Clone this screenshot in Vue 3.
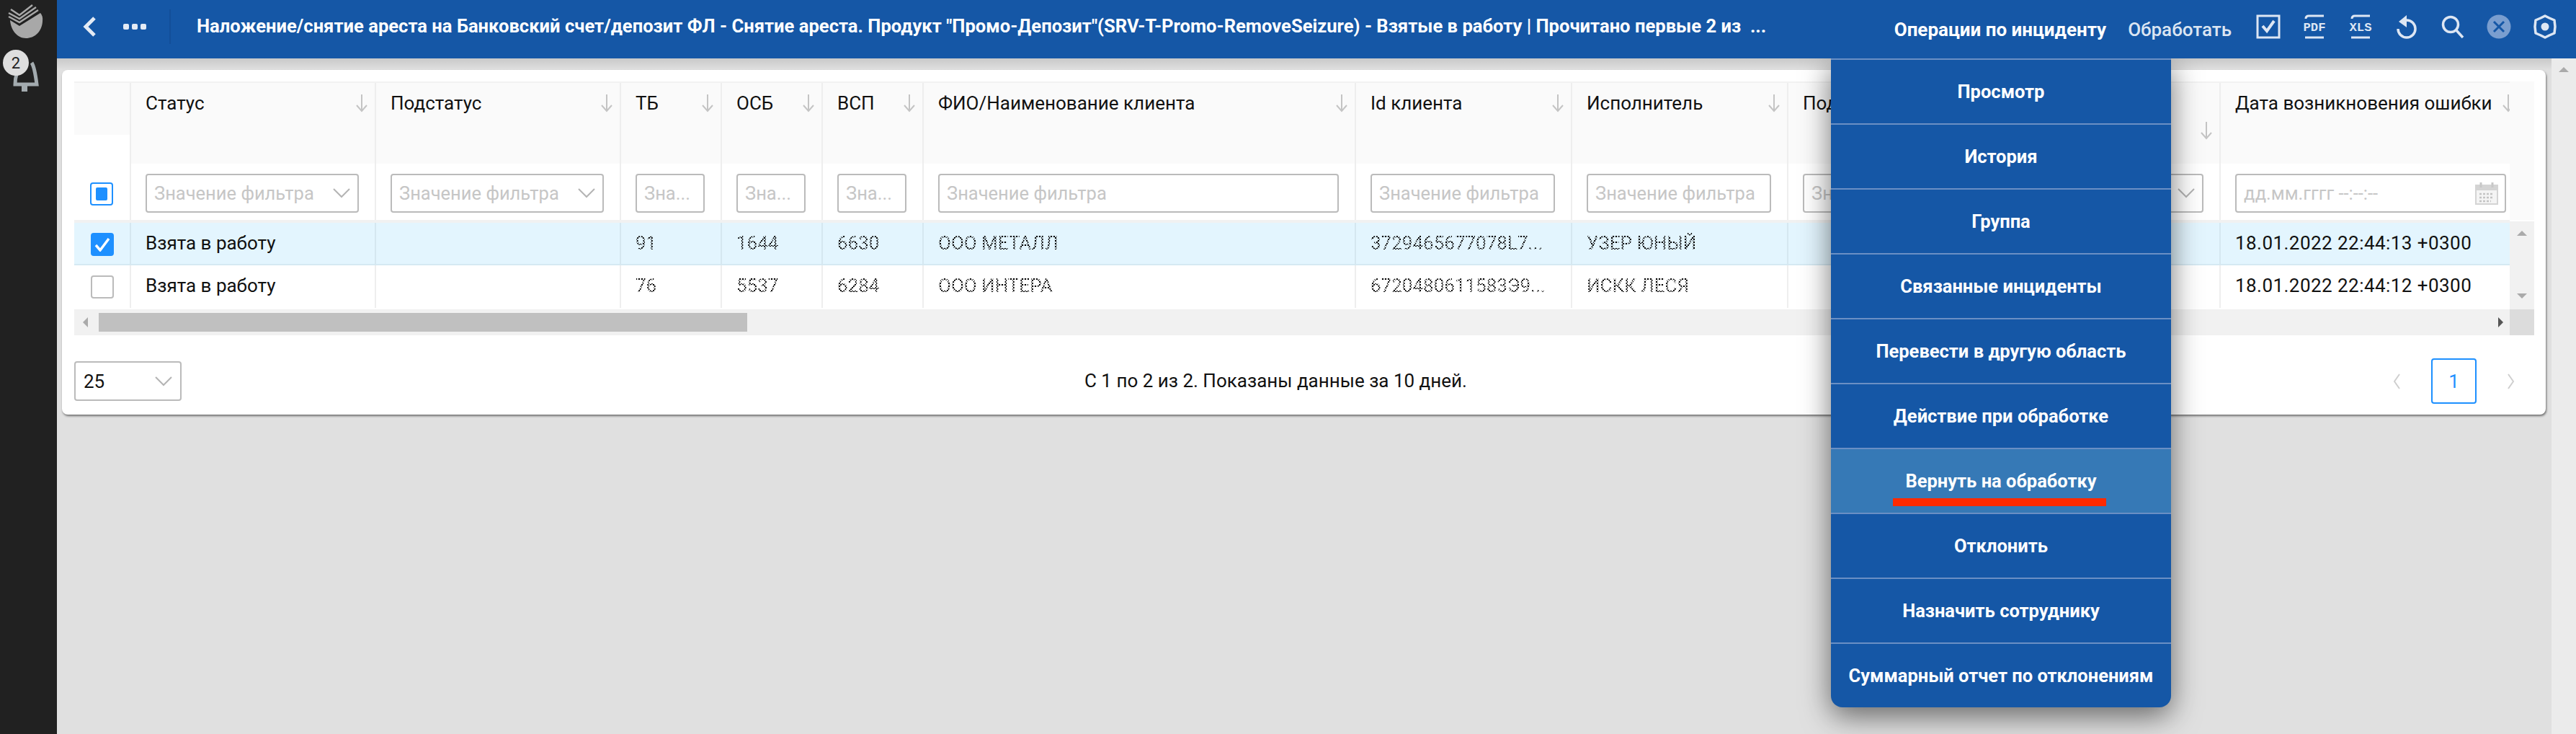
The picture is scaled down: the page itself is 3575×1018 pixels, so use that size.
<script setup>
const columns = [
  { title: 'Статус', filter: 'select', cls: 'c-status' },
  { title: 'Подстатус', filter: 'select', cls: 'c-status' },
  { title: 'ТБ', filter: 'text', ph: 'Зна...' },
  { title: 'ОСБ', filter: 'text', ph: 'Зна...' },
  { title: 'ВСП', filter: 'text', ph: 'Зна...' },
  { title: 'ФИО/Наименование клиента', filter: 'text' },
  { title: 'Id клиента', filter: 'text' },
  { title: 'Исполнитель', filter: 'text' },
  { title: 'Под', filter: 'text', ph: 'Зн' },
  { title: '', filter: 'select', low: true, ph: ' ' },
  { title: 'Дата возникновения ошибки', filter: 'date', cls: 'c-date' },
]
const rows = [
  { selected: true, cells: ['Взята в работу', '', '91', '1644', '6630', 'ООО МЕТАЛЛ', '3729465677078L7...', 'УЗЕР ЮНЫЙ', '', '', '18.01.2022 22:44:13 +0300'] },
  { selected: false, cells: ['Взята в работу', '', '76', '5537', '6284', 'ООО ИНТЕРА', '6720480611583Э9...', 'ИСКК ЛЕСЯ', '', '', '18.01.2022 22:44:12 +0300'] },
]
const masked = [2, 3, 4, 5, 6, 7]
const menu = ['Просмотр', 'История', 'Группа', 'Связанные инциденты', 'Перевести в другую область', 'Действие при обработке', 'Вернуть на обработку', 'Отклонить', 'Назначить сотруднику', 'Суммарный отчет по отклонениям']
</script>

<template>
  <div class="app">
    <aside class="side">
      <svg class="logo" width="79" height="60" viewBox="0 0 79 60">
        <path d="M14 28 L27 36 L56 18 Q60 22 59 30 C58 44 48 53 36 53 C24 53 15 42 14 28Z" fill="#a8a8a8" />
        <g fill="none" stroke="#a8a8a8" stroke-width="2.4">
          <polyline points="12,23 27,31 53,14" />
          <polyline points="12,18 27,26 50,10" />
          <polyline points="15,13 27,21 45,7" />
        </g>
      </svg>
      <div class="bell-wrap">
        <svg class="bell" width="79" height="70" viewBox="0 0 79 70">
          <path d="M44 14 Q48 20 51 44 H21 Q21 36 23 30" fill="none" stroke="#a3abaf" stroke-width="5" />
          <rect x="30" y="46" width="8" height="8" fill="#a3abaf" />
        </svg>
        <span class="badge">2</span>
      </div>
    </aside>

    <div class="main">
      <header class="top">
        <svg class="back" width="22" height="30" viewBox="0 0 22 30"><path d="M18 3 L6 15 L18 27" fill="none" stroke="#e4ebf5" stroke-width="5" /></svg>
        <div class="dots"><i></i><i></i><i></i></div>
        <div class="vline"></div>
        <div class="title">Наложение/снятие ареста на Банковский счет/депозит ФЛ - Снятие ареста. Продукт "Промо-Депозит"(SRV-T-Promo-RemoveSeizure) - Взятые в работу | Прочитано первые 2 из &nbsp;...</div>
        <div class="actions">
          <span class="act first">Операции по инциденту</span>
          <span class="act">Обработать</span>
          <div class="icons">
            <svg width="34" height="34" viewBox="0 0 34 34"><rect x="2" y="2" width="30" height="30" fill="none" stroke="#dde6f3" stroke-width="3" /><path d="M9 16 L15 23 L25 9" fill="none" stroke="#dde6f3" stroke-width="4" /></svg>
            <svg width="34" height="34" viewBox="0 0 34 34"><path d="M5 6 Q5 2 9 2 H30 M4 32 H30" fill="none" stroke="#dde6f3" stroke-width="3" /><text x="17" y="23" text-anchor="middle" class="svg-t" textLength="31" lengthAdjust="spacingAndGlyphs">PDF</text></svg>
            <svg width="34" height="34" viewBox="0 0 34 34"><path d="M5 6 Q5 2 9 2 H30 M4 32 H30" fill="none" stroke="#dde6f3" stroke-width="3" /><text x="17" y="23" text-anchor="middle" class="svg-t" textLength="31" lengthAdjust="spacingAndGlyphs">XLS</text></svg>
            <svg width="34" height="34" viewBox="0 0 34 34"><path d="M17 8 A12 12 0 1 1 5 20" fill="none" stroke="#dde6f3" stroke-width="3.5" /><path d="M6 10 L17 1 V18Z" fill="#dde6f3" /></svg>
            <svg width="34" height="34" viewBox="0 0 34 34"><circle cx="14" cy="14" r="10.5" fill="none" stroke="#dde6f3" stroke-width="3.5" /><path d="M21 21 L31 32" stroke="#dde6f3" stroke-width="3.5" /></svg>
            <svg width="34" height="34" viewBox="0 0 34 34"><circle cx="17" cy="17" r="16.5" fill="#7a9ecf" /><path d="M10 10 L24 24 M24 10 L10 24" stroke="#1557a6" stroke-width="3" /></svg>
            <svg width="34" height="34" viewBox="0 0 34 34"><path d="M17 2 L23 5 L30 8 L31 17 L30 26 L23 29 L17 32 L11 29 L4 26 L3 17 L4 8 L11 5Z" fill="none" stroke="#dde6f3" stroke-width="3.5" stroke-linejoin="round" /><circle cx="17" cy="17" r="5.5" fill="#dde6f3" /></svg>
          </div>
        </div>
      </header>

      <div class="body">
        <div class="content">
          <section class="card">
            <div class="grid-area">
              <div class="tbl">
                <div class="row head">
                  <div class="hcheck"><div class="hcheck-top"></div></div>
                  <div v-for="(c, k) in columns" :key="k" class="hcell" :class="[c.cls, { low: c.low }]">
                    <span class="htext">{{ c.title }}</span>
                    <svg class="arrow" width="16" height="25" viewBox="0 0 16 25"><path d="M8 0 V23 M1 15 L8 23 L15 15" fill="none" stroke="#c4c4c4" stroke-width="2" /></svg>
                  </div>
                </div>
                <div class="row filters">
                  <div class="fcheck"><span class="box partial"><i></i></span></div>
                  <div v-for="(c, k) in columns" :key="k" class="fcell" :class="c.cls">
                    <div class="input">
                      <span class="ph" v-if="c.filter === 'date'">дд.мм.гггг --:--:--</span>
                      <span class="ph" v-else>{{ c.ph || 'Значение фильтра' }}</span>
                      <svg v-if="c.filter === 'select'" class="chev" width="24" height="14" viewBox="0 0 24 14"><path d="M1 1 L12 12 L23 1" fill="none" stroke="#b4b4b4" stroke-width="2" /></svg>
                      <svg v-if="c.filter === 'date'" class="cal" width="32" height="32" viewBox="0 0 32 32">
                        <rect x="1" y="5" width="30" height="26" fill="#f4f4f4" stroke="#d4d4d4" stroke-width="2" />
                        <rect x="1" y="5" width="30" height="7" fill="#d4d4d4" />
                        <path d="M8 1 V8 M24 1 V8" stroke="#c8c8c8" stroke-width="3" />
                        <path d="M6 17 H26 M6 22 H26 M6 27 H22" stroke="#c4c4c4" stroke-width="2.4" stroke-dasharray="3 2" />
                      </svg>
                    </div>
                  </div>
                </div>
                <div class="sep"></div>
                <div v-for="(r, i) in rows" :key="i" class="row data" :class="{ sel: r.selected }">
                  <div class="dcheck">
                    <span class="box" :class="{ on: r.selected }">
                      <svg v-if="r.selected" width="22" height="20" viewBox="0 0 22 20"><path d="M2 11 L8 18 L20 2" fill="none" stroke="#fff" stroke-width="3.5" /></svg>
                    </span>
                  </div>
                  <div v-for="(t, j) in r.cells" :key="j" class="dcell" :class="columns[j].cls">
                    <span class="dtext" :class="{ masked: masked.includes(j) }">{{ t }}</span>
                  </div>
                </div>
              </div>
              <div class="gutter">
                <div class="gutter-head"></div>
                <div class="vscroll">
                  <span class="tri up"></span>
                  <span class="tri down"></span>
                </div>
              </div>
            </div>
            <div class="hscroll">
              <div class="htrack">
                <span class="tri-l"></span>
                <div class="thumb"></div>
                <span class="tri-r"></span>
              </div>
              <div class="corner"></div>
            </div>
            <div class="pager">
              <div class="size"><span>25</span><svg width="24" height="14" viewBox="0 0 24 14"><path d="M1 1 L12 12 L23 1" fill="none" stroke="#b4b4b4" stroke-width="2" /></svg></div>
              <div class="info">С 1 по 2 из 2. Показаны данные за 10 дней.</div>
              <div class="pages">
                <svg width="10" height="22" viewBox="0 0 10 22"><path d="M9 1 L2 11 L9 21" fill="none" stroke="#cfcfcf" stroke-width="2" /></svg>
                <span class="page">1</span>
                <svg width="10" height="22" viewBox="0 0 10 22"><path d="M1 1 L8 11 L1 21" fill="none" stroke="#cfcfcf" stroke-width="2" /></svg>
              </div>
            </div>
          </section>

          <nav class="menu">
            <div v-for="m in menu" :key="m" class="item" :class="{ hot: m === 'Вернуть на обработку' }">
              <span>{{ m }}</span>
              <i v-if="m === 'Вернуть на обработку'" class="mark"></i>
            </div>
          </nav>
        </div>
        <div class="pagescroll"><span class="tri up"></span></div>
      </div>
    </div>
  </div>
</template>

<style>
html, body { margin: 0; padding: 0; background: #e0e0e0; overflow: hidden; }
</style>

<style scoped>
.app {
  display: flex;
  width: 3575px;
  height: 1018px;
  overflow: hidden;
  font-family: Roboto, "Liberation Sans", sans-serif;
  font-size: 26px;
  color: #111;
}
.side { width: 79px; flex: none; background: #212121; position: relative; }
.logo { display: block; }
.bell-wrap { position: relative; height: 70px; margin-top: 9px; }
.bell { display: block; position: absolute; left: 0; top: 0; margin-top: 4px; }
.badge {
  position: absolute; left: 4px; top: 0; width: 36px; height: 36px; border-radius: 50%;
  background: #dedede; color: #222; display: flex; align-items: center; justify-content: center;
  font-size: 22px;
}
.main { flex: 1; display: flex; flex-direction: column; min-width: 0; }
.top {
  height: 81px; flex: none; background: #1557a6; display: flex; align-items: center;
  padding: 0 26px 0 34px; position: relative; z-index: 3; color: #fff;
}
.back { flex: none; margin-bottom: 7px; }
.dots { display: flex; gap: 4px; margin-left: 36px; margin-bottom: 7px; }
.dots i { width: 8px; height: 8px; background: #e4ebf5; border-radius: 2px; display: block; }
.vline { width: 2px; height: 48px; background: #124f99; margin-left: 32px; margin-bottom: 7px; }
.title { margin-left: 36px; font-weight: 700; font-size: 25.6px; white-space: nowrap; padding-bottom: 9px; }
.actions { margin-left: auto; display: flex; align-items: center; }
.act { font-weight: 700; font-size: 26px; color: #fff; margin-right: 30px; }
.act:nth-child(2) { color: #dbe5f2; margin-right: 34px; font-weight: 500; }
.icons { display: flex; gap: 30px; margin-bottom: 7px; }
.icons svg { display: block; }
.svg-t { font-family: "Liberation Mono", monospace; font-weight: 700; font-size: 17px; fill: #dde6f3; }

.body { flex: 1; display: flex; min-height: 0; background: linear-gradient(#c9c9c9 0, #e0e0e0 16px); }
.content { flex: 1; position: relative; padding: 16px 8px 0 7px; min-width: 0; }
.card {
  width: 3447px; height: 478px; background: #fff; border-radius: 8px; box-sizing: border-box;
  padding: 16px 16px 0 17px; box-shadow: 1px 2px 3px rgba(0, 0, 0, .5);
}
.grid-area { display: flex; width: 3414px; }
.tbl { width: 3380px; overflow: hidden; }
.row { display: grid; grid-template-columns: 77px 340px 340px 140px 140px 140px 600px 300px 300px 300px 300px 403px; }
.head { height: 114px; border-top: 2px solid #f2f2f2; box-sizing: border-box; background: #fafafa; }
.hcheck { background: #fff; }
.hcheck-top { height: 72px; background: #fafafa; }
.hcell {
  display: flex; align-items: flex-start; padding: 13px 10px 0 20px; border-left: 2px solid #eee;
  overflow: hidden; white-space: nowrap; line-height: 30px;
}
.arrow { margin-left: auto; margin-top: 3px; flex: none; }
.low .arrow { margin-top: 41px; }
.c-date .arrow { margin-right: -16px; }
.filters { height: 78px; background: #fff; }
.fcheck { display: flex; justify-content: center; padding-top: 26px; }
.fcheck .box { margin-left: -1px; }
.fcell { padding: 14px 22px 0 20px; border-left: 2px solid #eee; }
.c-date.fcell { padding-right: 5px; }
.input {
  height: 54px; border: 2px solid #bbb; border-radius: 4px; box-sizing: border-box; display: flex;
  align-items: center; padding-left: 10px; background: #fff; overflow: hidden; white-space: nowrap;
  font-size: 25.5px;
}
.ph { color: #c6c6c6; flex: 1; min-width: 0; overflow: hidden; }
.chev { flex: none; margin-right: 10px; }
.cal { flex: none; margin-right: 9px; }
.sep { height: 4px; background: #f1f1f1; }
.data { height: 59px; background: #fff; line-height: 56px; }
.data.sel { background: #e3f5fe; box-shadow: inset 0 -2px 0 #d5e9f3; }
.dcheck { display: flex; justify-content: center; padding-top: 14px; }
.dcell { padding-left: 20px; border-left: 2px solid #eee; white-space: nowrap; overflow: hidden; }
.sel .dcell { border-left-color: #d5e7f0; }
.c-date.dcell { letter-spacing: .45px; }
.masked {
  color: #000;
  display: inline-block;
  filter: blur(.5px);
  -webkit-mask-image: repeating-conic-gradient(#000 0 25%, rgba(0, 0, 0, .12) 0 50%);
  mask-image: repeating-conic-gradient(#000 0 25%, rgba(0, 0, 0, .12) 0 50%);
  -webkit-mask-size: 4px 4px;
  mask-size: 4px 4px;
}
.box {
  width: 32px; height: 32px; border: 2px solid #bbb; border-radius: 4px; box-sizing: border-box;
  display: flex; align-items: center; justify-content: center; background: #fff;
}
.box.partial { border-color: #1e90ff; }
.box.partial i { width: 16px; height: 18px; background: #1e90ff; border-radius: 2px; display: block; }
.box.on { background: #1e90ff; border-color: #1e90ff; }
.gutter { width: 34px; flex: none; }
.gutter-head { height: 192px; background: #fafafa; }
.vscroll { height: 122px; background: #f1f1f1; position: relative; margin-top: 2px; }
.tri { position: absolute; width: 0; height: 0; border-left: 7px solid transparent; border-right: 7px solid transparent; }
.tri.up { border-bottom: 7px solid #aaa; left: 10px; top: 13px; }
.tri.down { border-top: 7px solid #aaa; left: 10px; bottom: 15px; }
.hscroll { display: flex; width: 3414px; height: 36px; }
.htrack { width: 3380px; background: #f1f1f1; display: flex; align-items: center; position: relative; padding-left: 34px; box-sizing: border-box; }
.thumb { width: 900px; height: 26px; background: #c0c0c0; }
.tri-l { position: absolute; left: 12px; border-top: 7px solid transparent; border-bottom: 7px solid transparent; border-right: 7px solid #aaa; }
.tri-r { position: absolute; right: 9px; border-top: 7px solid transparent; border-bottom: 7px solid transparent; border-left: 7px solid #555; }
.corner { width: 34px; background: #dcdcdc; }
.pager { display: flex; align-items: center; justify-content: space-between; width: 3414px; margin-top: 36px; height: 55px; position: relative; }
.size {
  width: 149px; height: 55px; border: 2px solid #bbb; border-radius: 4px; box-sizing: border-box;
  display: flex; align-items: center; justify-content: space-between; padding: 0 11px;
}
.info { position: absolute; left: 1402px; top: 12px; white-space: nowrap; }
.pages { display: flex; align-items: center; gap: 43px; margin-right: 27px; }
.page {
  width: 63px; height: 63px; border: 2px solid #1e90ff; border-radius: 4px; box-sizing: border-box;
  display: flex; align-items: center; justify-content: center; color: #1e90ff; font-size: 26px;
}
.menu {
  position: absolute; left: 2462px; top: 0; width: 472px; z-index: 2; background: #1557a6; color: #fff;
  border-radius: 0 0 16px 16px; box-shadow: 0 12px 40px rgba(0, 0, 0, .55);
}
.item {
  height: 90px; border-top: 2px solid #6a8fc4; box-sizing: border-box; display: flex; align-items: center;
  justify-content: center; font-weight: 700; font-size: 25.5px; position: relative;
}
.item.hot { background: #3679b6; }
.mark { position: absolute; left: 86px; top: 68px; width: 296px; height: 11px; background: #ff2a00; }
.pagescroll { width: 34px; flex: none; background: #ebebeb; position: relative; }
.pagescroll .tri.up { left: 10px; top: 12px; }
</style>
